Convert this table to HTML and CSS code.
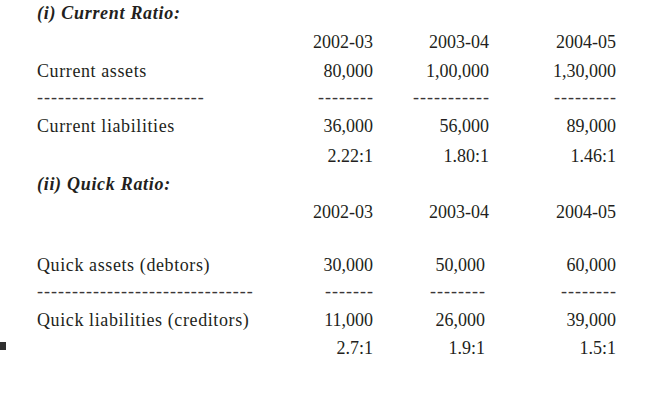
FILE: index.html
```html
<!DOCTYPE html>
<html>
<head>
<meta charset="utf-8">
<link rel="stylesheet" href="styles.css">
</head>
<body>
<div class="sheet">
  <div class="row title"><span class="mark-cell"></span><span class="heading">(i) Current Ratio:</span></div>
  <div class="row"><span class="mark-cell"></span><span class="label"></span><span class="num">2002-03</span><span class="num">2003-04</span><span class="num">2004-05</span></div>
  <div class="row mt1"><span class="mark-cell"></span><span class="label">Current assets</span><span class="num">80,000</span><span class="num">1,00,000</span><span class="num">1,30,000</span></div>
  <div class="row dash mtm2"><span class="mark-cell"></span><span class="label">------------------------</span><span class="num">--------</span><span class="num">-----------</span><span class="num">---------</span></div>
  <div class="row mt1"><span class="mark-cell"></span><span class="label">Current liabilities</span><span class="num">36,000</span><span class="num">56,000</span><span class="num">89,000</span></div>
  <div class="row mt2"><span class="mark-cell"></span><span class="label"></span><span class="num">2.22:1</span><span class="num">1.80:1</span><span class="num">1.46:1</span></div>
  <div class="row"><span class="mark-cell"></span><span class="heading">(ii) Quick Ratio:</span></div>
  <div class="row"><span class="mark-cell"></span><span class="label"></span><span class="num">2002-03</span><span class="num">2003-04</span><span class="num">2004-05</span></div>
  <div class="row gap"><span class="mark-cell"></span><span class="label">Quick assets (debtors)</span><span class="num">30,000</span><span class="num inset">50,000</span><span class="num">60,000</span></div>
  <div class="row dash mtm2"><span class="mark-cell"></span><span class="label">-------------------------------</span><span class="num">-------</span><span class="num inset">--------</span><span class="num">--------</span></div>
  <div class="row mt1"><span class="mark-cell"></span><span class="label">Quick liabilities (creditors)</span><span class="num">11,000</span><span class="num inset">26,000</span><span class="num">39,000</span></div>
  <div class="row"><span class="mark-cell"><span class="mark"></span></span><span class="label"></span><span class="num">2.7:1</span><span class="num inset">1.9:1</span><span class="num">1.5:1</span></div>
</div>
</body>
</html>
```

FILE: styles.css
```css
html, body {
  margin: 0;
  padding: 0;
  background: #ffffff;
}

body {
  font-family: "Liberation Serif", "Times New Roman", serif;
  font-size: 18px;
  color: #231f20;
}

.sheet {
  display: flex;
  flex-direction: column;
  width: 647px;
}

.row {
  display: grid;
  grid-template-columns: 37px 270px 66px 116px 127px;
  line-height: 28px;
  height: 28px;
  white-space: nowrap;
}

.title {
  line-height: 26px;
  height: 26px;
  margin-bottom: 2px;
}

.heading {
  grid-column: 2 / 6;
  font-weight: bold;
  font-style: italic;
  letter-spacing: 0.7px;
}

.label {
  text-align: left;
  letter-spacing: 0.6px;
}

.num {
  text-align: right;
}

.inset {
  padding-right: 4px;
}

.dash {
  color: #3a3637;
}

.dash .label,
.dash .num {
  letter-spacing: 1px;
}

.dash .num {
  margin-right: -1px;
}

.mt1 { margin-top: 1px; }
.mt2 { margin-top: 2px; }
.mtm2 { margin-top: -2px; }
.gap { margin-top: 25px; }

.mark-cell {
  display: block;
}

.mark {
  display: block;
  width: 6px;
  height: 8px;
  margin-top: 8px;
  background: #2f2f2f;
}
```
